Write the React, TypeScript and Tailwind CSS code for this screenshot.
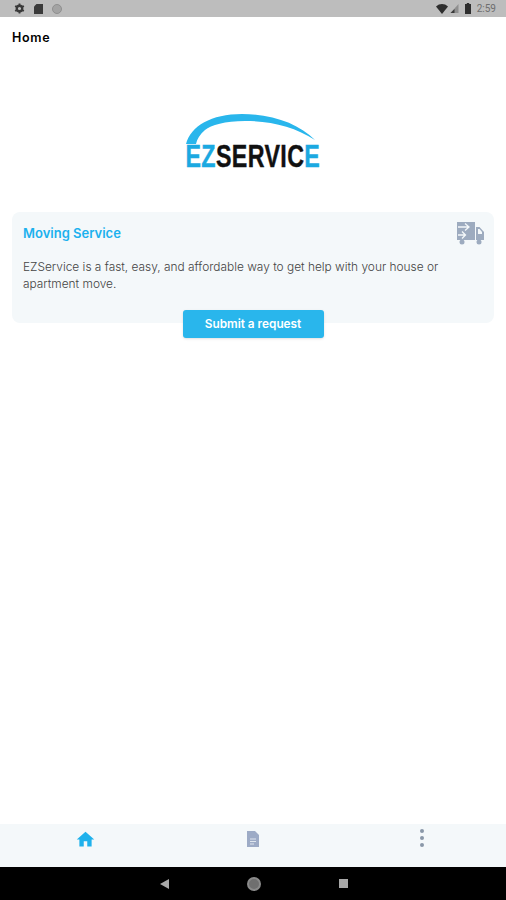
import { MdHome } from "react-icons/md";

function Logo() {
  return (
    <div className="flex w-[140px] flex-col items-center">
      <svg width="140" height="33" viewBox="184 112 140 33" className="block">
        <path
          d="M187 144 C192 126 212 114 243 114 C274 114 300 124 316 140 C296 127 272 121 246 121 C226 121 212 125 206 130 C201 134 198 139 197 144 Z"
          fill="#29b6ec"
        />
      </svg>
      <div className="flex h-6 w-[134px] items-center justify-center overflow-visible">
        <span className="origin-center scale-x-[0.75] whitespace-nowrap font-['Liberation_Sans',sans-serif] text-[31px] font-bold leading-6 tracking-[0.5px] text-[#111] [-webkit-text-stroke:0.4px]">
          <span className="text-[#1ba9e1]">EZ</span>SERVIC<span className="text-[#1ba9e1]">E</span>
        </span>
      </div>
    </div>
  );
}

function TruckIcon() {
  return (
    <svg width="27" height="23" viewBox="0 0 27 23" fill="#9dabbf">
      <path d="M0 0h18v18H0z" />
      <path d="M19 5h3.500L27 10v8h-8z" />
      <circle cx="5" cy="20" r="2.500" />
      <circle cx="22" cy="20" r="2.500" />
      <path d="M1 5h10M8 1.500L12 5 8 8.500M1 13h7M5 9.500L8.500 13 5 16.500" fill="none" stroke="#f4f8fa" strokeWidth="1.300" />
      <path d="M21 7h1.500l2.500 3v2h-4z" fill="#f4f8fa" />
    </svg>
  );
}

function StatusBar() {
  return (
    <div className="flex h-[17px] items-center justify-between bg-[#bdbdbd] pl-[14px] pr-[10px]">
      <div className="flex items-center gap-[9px]">
        <svg width="11" height="11" viewBox="0 0 24 24" fill="none" stroke="#3a3a3a" strokeWidth="5">
          <circle cx="12" cy="12" r="6" />
          <path d="M12 1v4M12 19v4M2.500 6.500l3.500 2M18 15.500l3.500 2M2.500 17.500l3.500-2M18 8.500l3.500-2" strokeWidth="4" />
        </svg>
        <svg width="9" height="10" viewBox="0 0 9 10" fill="#3a3a3a">
          <path d="M2.500 0H9v10H0V2.500z" />
        </svg>
        <div className="h-[10px] w-[10px] rounded-full border border-[#8f8f8f] bg-[#a3a3a3]" />
      </div>
      <div className="flex items-center">
        <svg width="12" height="10" viewBox="0 0 12 10" fill="#2e2e2e">
          <path d="M0 2.500C3.500-.8 8.500-.8 12 2.500L6 10z" />
        </svg>
        <svg width="9" height="9" viewBox="0 0 8 9" className="ml-[2px]">
          <path d="M8 0v9H0z" fill="#8f8f8f" />
          <path d="M4 5v4H0z" fill="#3a3a3a" />
        </svg>
        <svg width="6" height="11" viewBox="0 0 6 11" fill="#2e2e2e" className="ml-[6px]">
          <path d="M1.800 0h2.400v1H6v10H0V1h1.800z" />
        </svg>
        <span className="ml-[6px] font-['Roboto',sans-serif] text-[10px] leading-none text-[#6e6e6e]">2:59</span>
      </div>
    </div>
  );
}

function BottomNav() {
  return (
    <div className="flex h-[43px] items-start bg-[#f4f8fa]">
      <div className="flex flex-1 justify-center pl-[1px] pt-[5px]">
        <MdHome size={21} color="#1fb1ec" />
      </div>
      <div className="flex flex-1 justify-center pt-[7px]">
        <svg width="12" height="16" viewBox="0 0 12 16">
          <path d="M0 0h8l4 4v12H0z" fill="#9dabc6" />
          <path d="M3 7.500h6v1H3zM3 10h6v1H3zM3 12.500h4v1H3z" fill="#dfe6ee" />
        </svg>
      </div>
      <div className="flex flex-1 flex-col items-center gap-[3px] pt-[5px]">
        <div className="h-[4px] w-[4px] rounded-full bg-[#8a98a8]" />
        <div className="h-[4px] w-[4px] rounded-full bg-[#8a98a8]" />
        <div className="h-[4px] w-[4px] rounded-full bg-[#8a98a8]" />
      </div>
    </div>
  );
}

function NavBar() {
  return (
    <div className="flex h-[33px] items-center justify-center gap-[78px] bg-black pl-[1px]">
      <svg width="9" height="10" viewBox="0 0 9 10" fill="#a8a8a8">
        <path d="M9 0v10L0 5z" />
      </svg>
      <div className="h-[14px] w-[14px] rounded-full border-2 border-[#8a8a8a] bg-[#6f6f6f]" />
      <div className="h-[9px] w-[9px] bg-[#a8a8a8]" />
    </div>
  );
}

export default function App() {
  return (
    <div className="flex h-[900px] w-[506px] flex-col overflow-hidden bg-white font-['Inter',sans-serif]">
      <StatusBar />
      <div className="px-3 pt-[14px] text-[12.5px] font-semibold leading-[14px] tracking-[0.7px] text-black">Home</div>

      <div className="flex justify-center pt-[67px]">
        <Logo />
      </div>

      <div className="mx-3 mt-[43px] h-[111px] rounded-lg bg-[#f4f8fa] pl-[11px] pr-[10px] pt-[10px]">
        <div className="flex items-start justify-between">
          <span className="pt-[3px] text-[13px] font-semibold leading-4 text-[#1bb1ee]">Moving Service</span>
          <TruckIcon />
        </div>
        <p className="mt-[14px] text-[11.9px] font-light leading-[16.500px] text-[#444]">
          EZService is a fast, easy, and affordable way to get help with your house or apartment move.
        </p>
      </div>

      <div className="flex justify-center">
        <button className="-mt-[13px] h-7 w-[141px] rounded-[3px] bg-[#29b6ec] pt-[1px] text-[11.8px] font-semibold text-white shadow-sm">
          Submit a request
        </button>
      </div>

      <div className="flex-1" />
      <BottomNav />
      <NavBar />
    </div>
  );
}
